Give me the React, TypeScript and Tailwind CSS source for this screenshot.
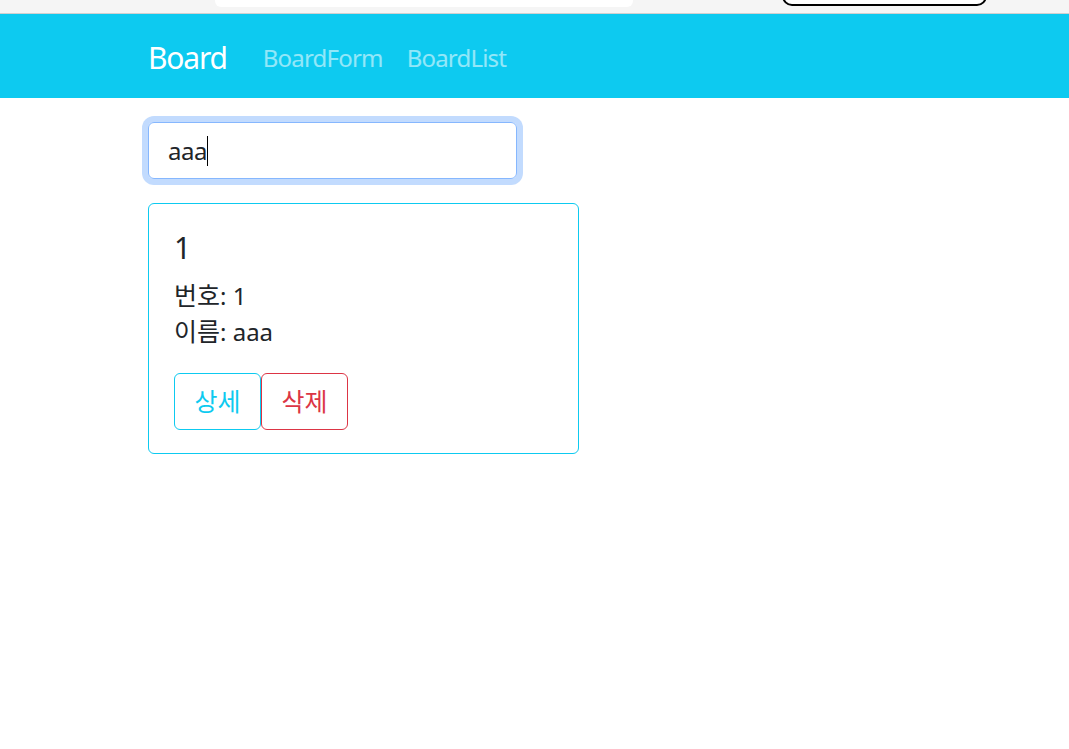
const FONT = "font-['Noto_Sans','Noto_Sans_CJK_KR',sans-serif]";

function BrowserStrip() {
  return (
    <div className="h-[14px] bg-[#f5f5f5] border-b border-[#d0d0d0] relative overflow-hidden">
      <div className="absolute left-[215px] top-[-10px] w-[418px] h-[17px] bg-white rounded-md" />
      <div className="absolute left-[782px] top-[-14px] w-[205px] h-[20px] rounded-full border-2 border-black bg-white" />
    </div>
  );
}

export default function App() {
  return (
    <div className={`${FONT} min-h-[749px] bg-white text-[#212529]`}>
      <BrowserStrip />
      <nav className="bg-[#0dcaf0] h-[84px]">
        <div className="ml-[148px] h-full flex items-center pt-[4px]">
          <span className="text-[30px] text-white mr-[24px] leading-none tracking-[-1.2px]">Board</span>
          <a className="text-[24px] text-white/55 px-[12px] tracking-[-0.8px]">BoardForm</a>
          <a className="text-[24px] text-white/55 px-[12px] tracking-[-0.8px]">BoardList</a>
        </div>
      </nav>
      <div className="ml-[148px] pt-[24px]">
        <div className="w-[369px] h-[57px] rounded-[6px] border border-[#86b7fe] ring-[6px] ring-[#0d6efd]/25 flex items-center px-[19px]">
          <span className="text-[24px] tracking-[-0.5px]">aaa</span>
          <span className="w-px h-[30px] bg-black" />
        </div>
        <div className="mt-[24px] w-[431px] border border-[#0dcaf0] rounded-[6px] p-[24px] pl-[25px] pb-[23px]">
          <h5 className="text-[30px] leading-[36px] mb-[12px] pt-[2px]">1</h5>
          <p className="text-[24px] leading-[36px] h-[36px]">
            <span className="text-[25px] leading-none">번호</span>: 1
          </p>
          <p className="text-[24px] leading-[36px] h-[36px] mb-[23px]">
            <span className="text-[25px] leading-none">이름</span>: aaa
          </p>
          <div className="flex">
            <button className="w-[87px] h-[57px] text-[25px] text-[#0dcaf0] border border-[#0dcaf0] rounded-[6px]">상세</button>
            <button className="w-[87px] h-[57px] text-[25px] text-[#dc3545] border border-[#dc3545] rounded-[6px]">삭제</button>
          </div>
        </div>
      </div>
    </div>
  );
}
